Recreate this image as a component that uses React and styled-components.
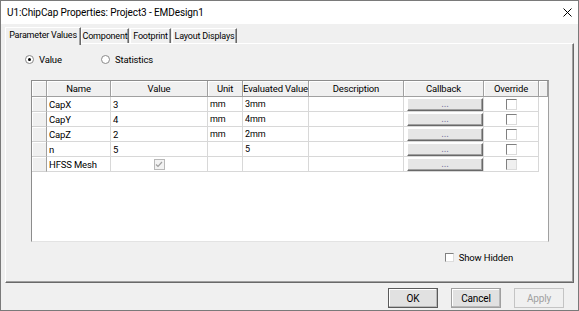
import React from "react";
import styled, { createGlobalStyle } from "styled-components";

const Global = createGlobalStyle`
  html, body { margin: 0; padding: 0; background: #f0f0f0; }
  body { font-family: Roboto, "Liberation Sans", Arial, sans-serif; font-size: 9.5px; letter-spacing: -0.15px; color: #000; }
  * { box-sizing: border-box; }
`;

const Window = styled.div`
  width: 579px;
  height: 311px;
  border: 1px solid #7a7a7a;
  display: flex;
  flex-direction: column;
  background: #f0f0f0;
  overflow: hidden;
`;

const TitleBar = styled.div`
  height: 23px;
  flex: none;
  background: #fff;
  display: flex;
  align-items: center;
  justify-content: space-between;
  padding: 0 6px 0 6px;
  font-size: 10px;
  letter-spacing: -0.1px;
`;

const Body = styled.div`
  flex: 1;
  display: flex;
  flex-direction: column;
  padding: 3px 4px 0 4px;
`;

const TabStrip = styled.div`
  height: 16px;
  display: flex;
  align-items: flex-end;
  position: relative;
  z-index: 1;
`;

const Tab = styled.div`
  height: ${(p) => (p.$active ? "18px" : "15px")};
  margin-bottom: ${(p) => (p.$active ? "-2px" : "0")};
  width: ${(p) => p.$w}px;
  margin-right: ${(p) => (p.$active ? "0" : "1px")};
  background: #f0f0f0;
  border-top: 1px solid #fff;
  border-left: 1px solid #fff;
  border-right: 1px solid #696969;
  display: flex;
  align-items: ${(p) => (p.$active ? "flex-start" : "center")};
  padding-top: ${(p) => (p.$active ? "2px" : "0")};
  justify-content: center;
  white-space: nowrap;
  font-size: 9px;
  letter-spacing: -0.2px;
  box-shadow: inset -1px 0 0 #a0a0a0;
`;

const Panel = styled.div`
  height: 240px;
  border-top: 1px solid #fff;
  border-left: 1px solid #fff;
  border-right: 1px solid #696969;
  border-bottom: 1px solid #696969;
  box-shadow: inset -1px -1px 0 #a0a0a0;
  display: flex;
  flex-direction: column;
  padding: 0 0 0 25px;
`;

const RadioRow = styled.div`
  display: flex;
  align-items: center;
  height: 12px;
  margin-top: 9px;
  margin-left: -6px;
`;

const RadioLabel = styled.label`
  display: flex;
  align-items: center;
  gap: 5px;
  width: ${(p) => p.$w}px;
`;

const RadioCircle = styled.span`
  width: 9px;
  height: 9px;
  border-radius: 50%;
  border: 1px solid #8a8a8a;
  background: #fff;
  display: flex;
  align-items: center;
  justify-content: center;
  &::after {
    content: "";
    width: 3px;
    height: 3px;
    border-radius: 50%;
    background: ${(p) => (p.$on ? "#000" : "transparent")};
  }
`;

const Grid = styled.div`
  margin-top: 15px;
  width: 518px;
  height: 162px;
  background: #fff;
  border-top: 1px solid #8c8c8c;
  border-left: 1px solid #8c8c8c;
  border-right: 1px solid #a0a0a0;
  border-bottom: 1px solid #e3e3e3;
`;

const Row = styled.div`
  display: grid;
  grid-template-columns: 15px 64px 97px 35px 66px 95px 80px 55px ${(p) => (p.$header ? "9px" : "")};
  height: ${(p) => (p.$header ? "16px" : "15px")};
`;

const HeadCell = styled.div`
  background: #f0f0f0;
  border-right: 1px solid #a0a0a0;
  border-bottom: 1px solid #a0a0a0;
  box-shadow: inset 1px 1px 0 #fff;
  display: flex;
  align-items: center;
  justify-content: center;
  white-space: nowrap;
  overflow: hidden;
`;

const RowHead = styled.div`
  background: #f0f0f0;
  border-right: 1px solid #a0a0a0;
  border-bottom: 1px solid #d0d0d0;
  box-shadow: inset 1px 1px 0 #fff;
`;

const Cell = styled.div`
  border-right: 1px solid #d8d8d8;
  border-bottom: 1px solid #d8d8d8;
  display: flex;
  align-items: center;
  justify-content: ${(p) => (p.$center ? "center" : "flex-start")};
  padding-left: ${(p) => (p.$center ? "0" : "2px")};
  white-space: nowrap;
  font-size: ${(p) => (p.$small ? "9px" : "inherit")};
`;

const CallbackBtn = styled.div`
  width: 77px;
  height: 13px;
  margin-left: 1px;
  background: #e6e6e6;
  border-top: 1px solid #fff;
  border-left: 1px solid #fff;
  border-right: 1px solid #696969;
  border-bottom: 1px solid #696969;
  box-shadow: inset -1px -1px 0 #a0a0a0;
  display: flex;
  align-items: center;
  justify-content: center;
  color: #7a76a0;
  font-size: 10px;
  line-height: 1;
  padding-bottom: 1px;
`;

const Box = styled.span`
  width: ${(p) => p.$s || 11}px;
  height: ${(p) => p.$s || 11}px;
  background: ${(p) => (p.$disabled ? "#f0f0f0" : "#fff")};
  border-top: 1px solid #808080;
  border-left: 1px solid #808080;
  border-right: 1px solid #dcdcdc;
  border-bottom: 1px solid #dcdcdc;
  display: flex;
  align-items: center;
  justify-content: center;
`;

const CheckBoxDisabled = styled.span`
  width: 11px;
  height: 11px;
  background: #f2f2f2;
  border: 1px solid #b8b8b8;
  display: flex;
  align-items: center;
  justify-content: center;
`;

const BottomRow = styled.div`
  display: flex;
  justify-content: flex-end;
  align-items: center;
  margin-top: 10px;
  padding-right: 60px;
  gap: 5px;
`;

const Footer = styled.div`
  display: flex;
  justify-content: flex-end;
  gap: 13px;
  padding: 5px 10px 0 0;
`;

const Button = styled.div`
  width: 50px;
  height: 20px;
  background: ${(p) => (p.$disabled ? "#f0f0f0" : "#e1e1e1")};
  color: ${(p) => (p.$disabled ? "#a0a0a0" : "#000")};
  border: 1px solid ${(p) => (p.$default ? "#5a5a5a" : p.$disabled ? "#c4c4c4" : "#a0a0a0")};
  box-shadow: ${(p) => (p.$disabled ? "none" : "inset -1px -1px 0 #b8b8b8, inset 1px 1px 0 #fff")};
  display: flex;
  align-items: center;
  justify-content: center;
  font-size: 10px;
`;

const Check = ({ color = "#a0a0a0" }) => (
  <svg width="8" height="7" viewBox="0 0 8 7">
    <path d="M1 3.5 L3 5.5 L7 1" fill="none" stroke={color} strokeWidth="1.2" />
  </svg>
);

const rows = [
  { name: "CapX", value: "3", unit: "mm", ev: "3mm" },
  { name: "CapY", value: "4", unit: "mm", ev: "4mm" },
  { name: "CapZ", value: "2", unit: "mm", ev: "2mm" },
  { name: "n", value: "5", unit: "", ev: "5" },
];

export default function App() {
  return (
    <>
      <Global />
      <Window>
        <TitleBar>
          <span>U1:ChipCap Properties: Project3 - EMDesign1</span>
          <svg width="9" height="9" viewBox="0 0 9 9">
            <path d="M0.5 0.5 L8.5 8.5 M8.5 0.5 L0.5 8.5" stroke="#000" strokeWidth="1" />
          </svg>
        </TitleBar>
        <Body>
          <TabStrip>
            <Tab $active $w={76}>Parameter Values</Tab>
            <Tab $w={48}>Component</Tab>
            <Tab $w={41}>Footprint</Tab>
            <Tab $w={65}>Layout Displays</Tab>
          </TabStrip>
          <Panel>
            <RadioRow>
              <RadioLabel $w={76}>
                <RadioCircle $on />
                Value
              </RadioLabel>
              <RadioLabel $w={80}>
                <RadioCircle />
                Statistics
              </RadioLabel>
            </RadioRow>
            <Grid>
              <Row $header>
                <HeadCell />
                <HeadCell>Name</HeadCell>
                <HeadCell>Value</HeadCell>
                <HeadCell>Unit</HeadCell>
                <HeadCell>Evaluated Value</HeadCell>
                <HeadCell>Description</HeadCell>
                <HeadCell>Callback</HeadCell>
                <HeadCell>Override</HeadCell>
                <HeadCell />
              </Row>
              {rows.map((r) => (
                <Row key={r.name}>
                  <RowHead />
                  <Cell>{r.name}</Cell>
                  <Cell>{r.value}</Cell>
                  <Cell $small>{r.unit}</Cell>
                  <Cell $small>{r.ev}</Cell>
                  <Cell />
                  <Cell>
                    <CallbackBtn>...</CallbackBtn>
                  </Cell>
                  <Cell $center>
                    <Box />
                  </Cell>
                </Row>
              ))}
              <Row>
                <RowHead />
                <Cell>HFSS Mesh</Cell>
                <Cell $center>
                  <CheckBoxDisabled>
                    <Check />
                  </CheckBoxDisabled>
                </Cell>
                <Cell />
                <Cell />
                <Cell />
                <Cell>
                  <CallbackBtn>...</CallbackBtn>
                </Cell>
                <Cell $center>
                  <Box $disabled />
                </Cell>
              </Row>
            </Grid>
            <BottomRow>
              <Box $s={9} />
              <span>Show Hidden</span>
            </BottomRow>
          </Panel>
          <Footer>
            <Button $default>OK</Button>
            <Button>Cancel</Button>
            <Button $disabled>Apply</Button>
          </Footer>
        </Body>
      </Window>
    </>
  );
}
